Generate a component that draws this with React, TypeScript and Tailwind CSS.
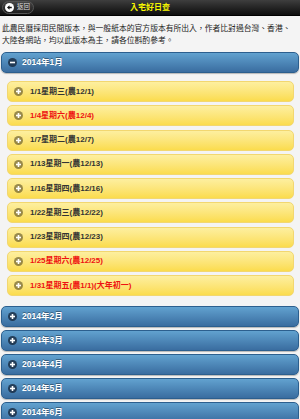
import React from 'react'

const DAYS = [
  { label: '1/1星期三(農12/1)', red: false },
  { label: '1/4星期六(農12/4)', red: true },
  { label: '1/7星期二(農12/7)', red: false },
  { label: '1/13星期一(農12/13)', red: false },
  { label: '1/16星期四(農12/16)', red: false },
  { label: '1/22星期三(農12/22)', red: false },
  { label: '1/23星期四(農12/23)', red: false },
  { label: '1/25星期六(農12/25)', red: true },
  { label: '1/31星期五(農1/1)(大年初一)', red: true },
]

const MONTHS = ['2014年2月', '2014年3月', '2014年4月', '2014年5月', '2014年6月']

function CircleIcon({ minus, fill }: { minus?: boolean; fill: string }) {
  return (
    <svg viewBox="0 0 18 18" className="w-[9px] h-[9px] shrink-0">
      <circle cx="9" cy="9" r="9" fill={fill} />
      <rect x="4" y="7.4" width="10" height="3.2" fill="#fff" />
      {!minus && <rect x="7.4" y="4" width="3.2" height="10" fill="#fff" />}
    </svg>
  )
}

function MonthBar({ label, open }: { label: string; open?: boolean }) {
  return (
    <div className="h-[21px] rounded-[5px] border border-[#2c5f8e] bg-gradient-to-b from-[#62a2cf] to-[#3a6da0] flex items-center gap-[5px] pl-[6px] shadow-[0_1px_1px_rgba(0,0,0,0.25)]">
      <CircleIcon minus={open} fill="rgba(20,35,55,0.75)" />
      <span className="text-[8.5px] font-bold text-white [text-shadow:0_-1px_0_rgba(0,0,0,0.35)]">{label}</span>
    </div>
  )
}

export default function App() {
  return (
    <div className="w-[300px] h-[419px] overflow-hidden bg-[#f4f4f4] font-[family-name:'Liberation_Sans','Noto_Sans_CJK_TC',sans-serif]">
      {/* Header */}
      <div className="relative h-[16px] bg-gradient-to-b from-[#3e3e3e] to-[#0e0e0e] border-b border-[#000] flex items-center justify-center">
        <div className="absolute left-[2px] top-[1px] h-[13px] w-[32px] rounded-full bg-gradient-to-b from-[#444] to-[#1e1e1e] border border-[#555] flex items-center gap-[3px] pl-[2px]">
          <svg viewBox="0 0 18 18" className="w-[9px] h-[9px]">
            <circle cx="9" cy="9" r="9" fill="#fff" />
            <path d="M4 9 L9 4.5 L9 7.3 L13.5 7.3 L13.5 10.7 L9 10.7 L9 13.5 Z" fill="#111" />
          </svg>
          <span className="text-[6.5px] text-[#ddd] leading-none">返回</span>
        </div>
        <span className="text-[8px] font-bold text-[#f6f600] leading-none">入宅好日查</span>
      </div>

      {/* Intro */}
      <p className="px-[2px] pt-[7px] text-[7.8px] leading-[12px] text-[#222]">
        此農民曆採用民間版本，與一般紙本的官方版本有所出入，作者比對過台灣、香港、大陸各網站，均以此版本為主，請各位斟酌參考。
      </p>

      {/* Sections */}
      <div className="mt-[5px] px-[1px]">
        <MonthBar label="2014年1月" open />
        <div className="pt-[8px] pb-[10px] pl-[6px] pr-[5px] flex flex-col gap-[3.25px]">
          {DAYS.map(d => (
            <div
              key={d.label}
              className="h-[21px] rounded-[5px] border border-[#f2d770] bg-gradient-to-b from-[#fdef9f] to-[#fbdc4c] flex items-center gap-[7px] pl-[6px]"
            >
              <CircleIcon fill="rgba(70,60,30,0.55)" />
              <span className={`text-[8px] font-bold ${d.red ? 'text-[#ee1111]' : 'text-[#333]'}`}>{d.label}</span>
            </div>
          ))}
        </div>
        <div className="flex flex-col gap-[3px]">
          {MONTHS.map(m => (
            <MonthBar key={m} label={m} />
          ))}
        </div>
      </div>
    </div>
  )
}
